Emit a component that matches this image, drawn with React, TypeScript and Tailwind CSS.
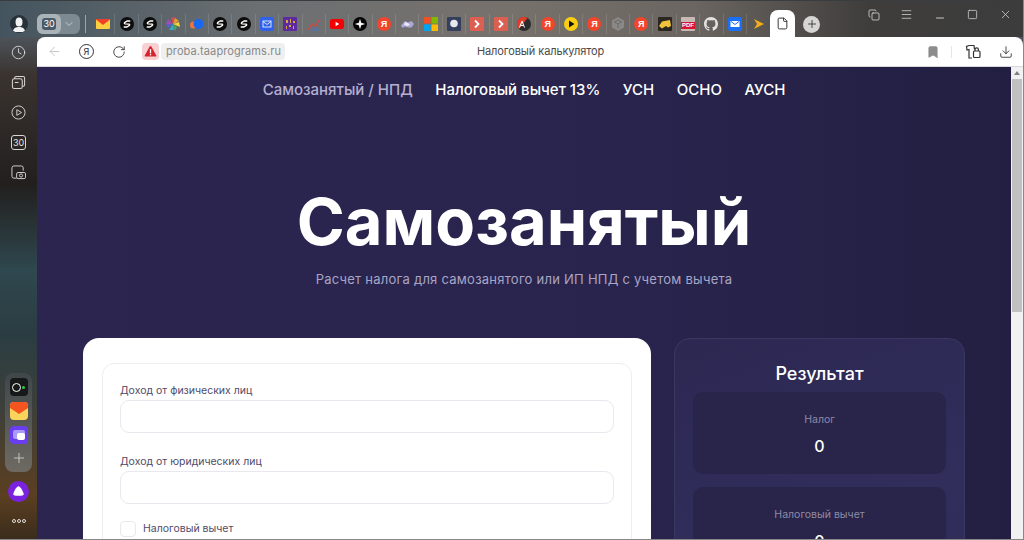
import { ArrowLeft, Bookmark, ChevronDown, Download, File, Minus, Plus, RotateCw, Square, X, Menu, Copy, Clock } from 'lucide-react'

const sans = 'font-["Inter","Noto_Sans",sans-serif]'

function Logo({ kind }: { kind: string }) {
  if (kind === 'mail') {
    return (
      <svg viewBox="0 0 14 14" className="h-[14px] w-[14px]">
        <rect y="2" width="14" height="10" rx="1" fill="#fbcf3d" />
        <path d="M0 2.5 7 8l7-5.5V2H0z" fill="#f0402b" />
      </svg>
    )
  }
  if (kind === 's') {
    return (
      <svg viewBox="0 0 14 14" className="h-[14px] w-[14px]">
        <circle cx="7" cy="7" r="7" fill="#0c0c0c" />
        <path d="M9.800 4H7L4.600 5.600Q3.800 6.600 5 6.900L9 7.100Q10.200 7.400 9.400 8.400L7 10H4.200" stroke="#fff" strokeWidth="1.300" fill="none" strokeLinecap="round" strokeLinejoin="round" />
      </svg>
    )
  }
  if (kind === 'wheel') {
    return (
      <svg viewBox="0 0 14 14" className="h-[14px] w-[14px]">
        <path d="M7 7 5 1l4-1z" fill="#d94c57" />
        <path d="M7 7l2-6 4 3z" fill="#ef9a2d" />
        <path d="M7 7l6-2 1 5z" fill="#f5d33f" />
        <path d="M7 7l4 3-2 4z" fill="#43ad5a" />
        <path d="M7 7l1 6-5 0z" fill="#3ca7c9" />
        <path d="M7 7l-5 4-2-4z" fill="#5a62c9" />
        <path d="M7 7H0l2-5z" fill="#a04fb0" />
      </svg>
    )
  }
  if (kind === 'dot') {
    return (
      <svg viewBox="0 0 14 14" className="h-[14px] w-[14px]">
        <circle cx="3.500" cy="8" r="3.500" fill="#f0743a" />
        <circle cx="8.500" cy="7" r="5" fill="#1668f0" />
      </svg>
    )
  }
  if (kind === 'bluemail') {
    return (
      <svg viewBox="0 0 14 14" className="h-[14px] w-[14px]">
        <rect width="14" height="14" rx="2" fill="#2f62e8" />
        <rect x="3" y="4" width="8" height="6" fill="none" stroke="#fff" strokeWidth="0.8" />
        <path d="M3 4.500 7 7.500 11 4.500" fill="none" stroke="#fff" strokeWidth="0.8" />
      </svg>
    )
  }
  if (kind === 'purple') {
    return (
      <svg viewBox="0 0 14 14" className="h-[14px] w-[14px]">
        <rect width="14" height="14" rx="1" fill="#5d2aa0" />
        <path d="M3 3h2v3H3zM7 2h1v4H7zM10 4h2v2h-2zM3 9h1v3H3zM6 8h2v2H6zM10 9h1v3h-1z" fill="#d9a63c" />
      </svg>
    )
  }
  if (kind === 'chart') {
    return (
      <svg viewBox="0 0 14 14" className="h-[14px] w-[14px]" fill="none">
        <path d="M1 13 5 7l3 3 5-8" stroke="#d8433c" strokeWidth="1.2" />
        <path d="M2 13h11M4 12l3-2 3 2" stroke="#4878b8" strokeWidth="1" />
      </svg>
    )
  }
  if (kind === 'yt') {
    return (
      <svg viewBox="0 0 14 14" className="h-[14px] w-[14px]">
        <rect y="2" width="14" height="10" rx="2.500" fill="#f40000" />
        <path d="M5.600 4.800v4.400L9.200 7z" fill="#fff" />
      </svg>
    )
  }
  if (kind === 'star') {
    return (
      <svg viewBox="0 0 14 14" className="h-[14px] w-[14px]">
        <circle cx="7" cy="7" r="7" fill="#050505" />
        <path d="M7 1.800 8.200 5.800 12.200 7 8.200 8.200 7 12.200 5.800 8.200 1.800 7 5.800 5.800z" fill="#fff" />
      </svg>
    )
  }
  if (kind === 'ya') {
    return (
      <span className="flex h-[14px] w-[14px] items-center justify-center rounded-full bg-[#f2452c] font-['Liberation_Sans',sans-serif] text-[9px] leading-none font-bold text-white">
        Я
      </span>
    )
  }
  if (kind === 'cloud') {
    return (
      <svg viewBox="0 0 14 14" className="h-[14px] w-[14px]">
        <path d="M1 8.500 5 4l3 1.500L11.500 4 14 7l-2.500 3.500H8L5 9.500 2.500 11z" fill="#a9a8d8" />
        <path d="M5 5l3 1 2 2-3 1-3-1z" fill="#e9e9f5" />
      </svg>
    )
  }
  if (kind === 'ms') {
    return (
      <svg viewBox="0 0 14 14" className="h-[14px] w-[14px]">
        <rect width="6.600" height="6.600" fill="#f25022" />
        <rect x="7.400" width="6.600" height="6.600" fill="#7fba00" />
        <rect y="7.400" width="6.600" height="6.600" fill="#00a4ef" />
        <rect x="7.400" y="7.400" width="6.600" height="6.600" fill="#ffb900" />
      </svg>
    )
  }
  if (kind === 'blob') {
    return (
      <svg viewBox="0 0 14 14" className="h-[14px] w-[14px]">
        <rect width="14" height="14" rx="1" fill="#333f5c" />
        <circle cx="7" cy="6.500" r="3.800" fill="#e6e8f0" />
      </svg>
    )
  }
  if (kind === 'next') {
    return (
      <svg viewBox="0 0 14 14" className="h-[14px] w-[14px]">
        <rect width="14" height="14" rx="1" fill="#dc5f52" />
        <path d="M5 3.500 8.500 7 5 10.500" fill="none" stroke="#fff" strokeWidth="1.8" />
      </svg>
    )
  }
  if (kind === 'translate') {
    return (
      <svg viewBox="0 0 14 14" className="h-[14px] w-[14px]">
        <circle cx="7" cy="7" r="7" fill="#2c2c2c" />
        <path d="M7 0a7 7 0 0 0-5 12L10.500 1A7 7 0 0 0 7 0z" fill="#e23d2a" />
        <path d="M2.500 10.500 5 4l2.500 6.500M3.500 8.500h3" stroke="#fff" strokeWidth="1" fill="none" />
      </svg>
    )
  }
  if (kind === 'play') {
    return (
      <svg viewBox="0 0 14 14" className="h-[14px] w-[14px]">
        <circle cx="7" cy="7" r="7" fill="#fbcf10" />
        <path d="M5 3.500v7L10.500 7z" fill="#111" />
      </svg>
    )
  }
  if (kind === 'hex') {
    return (
      <svg viewBox="0 0 14 14" className="h-[14px] w-[14px]">
        <path d="M7 0 13 3.500v7L7 14 1 10.500v-7z" fill="#8a8886" />
        <path d="M7 3 10.500 5 7 7 3.500 5zM7 7v4" stroke="#6d6b69" fill="none" />
      </svg>
    )
  }
  if (kind === 'game') {
    return (
      <svg viewBox="0 0 14 14" className="h-[14px] w-[14px]">
        <rect width="14" height="14" rx="1" fill="#2a2620" />
        <path d="M1 9 4 4.500 12 3l1 6-3 1.500-2-1.500-4 2.500z" fill="#f0c33a" />
      </svg>
    )
  }
  if (kind === 'pdf') {
    return (
      <span className="flex h-[14px] w-[14px] items-end justify-center rounded-[1px] bg-[#c9b9b4]">
        <span className="mb-[2px] bg-[#d8152d] px-[1px] font-['Liberation_Sans',sans-serif] text-[6px] leading-[7px] font-bold text-white">PDF</span>
      </span>
    )
  }
  if (kind === 'github') {
    return (
      <svg viewBox="0 0 16 16" className="h-[14px] w-[14px]" fill="#e4e2e0">
        <path d="M8 0C3.580 0 0 3.580 0 8c0 3.540 2.290 6.530 5.470 7.590.4.070.55-.17.55-.38 0-.19-.01-.82-.01-1.490-2.010.37-2.530-.49-2.690-.94-.09-.23-.48-.94-.82-1.130-.28-.15-.68-.52-.01-.53.630-.01 1.080.58 1.230.82.720 1.210 1.870.870 2.330.660.070-.520.280-.870.510-1.070-1.780-.2-3.640-.89-3.640-3.950 0-.870.310-1.590.820-2.150-.08-.2-.36-1.020.08-2.120 0 0 .67-.21 2.200.82a7.500 7.500 0 0 1 4 0c1.530-1.040 2.200-.82 2.200-.82.440 1.100.160 1.920.080 2.120.510.560.820 1.270.820 2.150 0 3.070-1.870 3.750-3.650 3.950.290.250.540.730.540 1.480 0 1.070-.01 1.930-.01 2.200 0 .21.150.460.550.380A8.010 8.010 0 0 0 16 8c0-4.420-3.580-8-8-8z" />
      </svg>
    )
  }
  if (kind === 'bluemail2') {
    return (
      <svg viewBox="0 0 14 14" className="h-[14px] w-[14px]">
        <rect width="14" height="14" rx="2" fill="#1b6ff2" />
        <rect x="2.500" y="4" width="9" height="6" fill="#fff" />
        <path d="M3 4.500 7 7.500 11 4.500" fill="none" stroke="#1b6ff2" strokeWidth="1" />
      </svg>
    )
  }
  return (
    <svg viewBox="0 0 14 14" className="h-[14px] w-[14px]">
      <path d="M2 2 12 7 2 12 5 7z" fill="#f3ad1b" />
    </svg>
  )
}

const pinned = [
  'mail', 's', 's', 'wheel', 'dot', 's', 's', 'bluemail', 'purple', 'chart', 'yt', 'star', 'ya', 'cloud', 'ms', 'blob',
  'next', 'next', 'translate', 'ya', 'play', 'ya', 'hex', 'ya', 'game', 'pdf', 'github', 'bluemail2', 'arrow',
]

function TopBar() {
  return (
    <div className="flex h-[37px] items-center border-t border-[#3a3d40] pt-[10px]">
      <div className="flex w-[37px] justify-center">
        <div className="flex h-[18px] w-[18px] items-end justify-center overflow-hidden rounded-full bg-[#26313a]">
          <svg viewBox="0 0 18 18" className="h-[18px] w-[18px]" fill="#f2f2f2">
            <ellipse cx="9" cy="7" rx="3.500" ry="4.500" />
            <path d="M3 17c0-4 3-5 6-5s6 1 6 5z" />
          </svg>
        </div>
      </div>
      <div className="flex h-[20px] w-[43px] items-center rounded-md bg-[#7d8a91]">
        <div className="flex h-[20px] w-[24px] items-center justify-center rounded-md bg-[#aab4b8]">
          <span className={`${sans} rounded-[3px] bg-[#4b5a66] px-[1px] text-[9px] leading-[12px] text-white`}>30</span>
        </div>
        <ChevronDown className="ml-[2px] h-3 w-3 text-[#c4ccd0]" strokeWidth={2} />
      </div>
      <div className="mr-[6px] ml-[5px] h-[18px] w-px bg-[#a0a6a8]" />
      <div className="flex items-center">
        {pinned.map((kind, i) => (
          <div key={i} className="flex h-[20px] w-[23.4px] items-center justify-center border-r border-[#ffffff1f] last:border-r-0">
            <Logo kind={kind} />
          </div>
        ))}
      </div>
      <div className="-mt-[10px] flex h-[27px] w-[25px] items-center justify-center self-end rounded-t-lg bg-white">
        <File className="h-[13px] w-[13px] text-[#333]" strokeWidth={1.8} />
      </div>
      <div className="ml-[8px] flex h-[17px] w-[17px] items-center justify-center rounded-full bg-[#d6d5d3]">
        <Plus className="h-3 w-3 text-[#444]" strokeWidth={2} />
      </div>
      <div className="-mt-[19px] ml-auto flex items-center pr-[1px] text-[#d9d8d6]">
        <div className="flex h-[16px] w-[33px] items-center justify-center">
          <Copy className="h-[12px] w-[12px]" strokeWidth={1.6} />
        </div>
        <div className="flex h-[16px] w-[33px] items-center justify-center">
          <Menu className="h-[13px] w-[13px]" strokeWidth={1.4} />
        </div>
        <div className="flex h-[16px] w-[33px] items-end justify-center">
          <Minus className="-mb-[1px] h-[12px] w-[12px]" strokeWidth={1.8} />
        </div>
        <div className="flex h-[16px] w-[33px] items-center justify-center">
          <Square className="h-[11px] w-[11px]" strokeWidth={1.6} />
        </div>
        <div className="flex h-[16px] w-[33px] items-center justify-center">
          <X className="h-[13px] w-[13px]" strokeWidth={1.4} />
        </div>
      </div>
    </div>
  )
}

function SideBar() {
  return (
    <div className="flex w-[37px] shrink-0 flex-col items-center">
      <Clock className="mt-[8px] h-[15px] w-[15px] text-[#e4e6e6]" strokeWidth={1.3} />
      <svg viewBox="0 0 16 16" className="mt-[15px] h-[15px] w-[15px] text-[#d8d6d4]" fill="none" stroke="currentColor" strokeWidth="1.1">
        <rect x="1.500" y="4" width="10.500" height="10.500" rx="2" />
        <path d="M4 4V3a1.500 1.500 0 0 1 1.500-1.500H13a1.500 1.500 0 0 1 1.500 1.500v7.500A1.500 1.500 0 0 1 13 12h-1" />
        <path d="M4 8h4" />
      </svg>
      <svg viewBox="0 0 16 16" className="mt-[15px] h-[15px] w-[15px] text-[#d8d6d4]" fill="none" stroke="currentColor" strokeWidth="1">
        <circle cx="8" cy="8" r="7" />
        <path d="M6.200 5v6l5-3z" />
      </svg>
      <div className={`${sans} mt-[15px] flex h-[15px] w-[15px] items-center justify-center rounded-[3px] border border-[#d8d6d4] text-[9px] leading-none text-[#e4e2e0]`}>
        30
      </div>
      <svg viewBox="0 0 16 16" className="mt-[15px] h-[15px] w-[15px] text-[#d8d6d4]" fill="none" stroke="currentColor" strokeWidth="1">
        <path d="M6 14H3a2 2 0 0 1-2-2V3a2 2 0 0 1 2-2h8a2 2 0 0 1 2 2v3" />
        <rect x="6" y="8" width="9.500" height="6.500" rx="1.500" />
        <circle cx="10.700" cy="11.200" r="1.700" />
      </svg>
      <div className="mt-[193px] flex h-[99px] w-[27px] shrink-0 flex-col items-center gap-[6px] rounded-[8px] bg-[linear-gradient(180deg,#3f474b,#6e6a62)] pt-[5px]">
        <div className="flex h-[18px] w-[18px] items-center justify-center gap-[1px] rounded-[4px] bg-[#16181a]">
          <span className="h-[9px] w-[9px] rounded-full border border-white" />
          <span className="h-[3px] w-[3px] rounded-full bg-[#2ed14a]" />
        </div>
        <svg viewBox="0 0 18 18" className="h-[18px] w-[18px]">
          <rect width="18" height="18" rx="4" fill="#fbd45c" />
          <path d="M0 4a4 4 0 0 1 4-4h10a4 4 0 0 1 4 4v2l-9 6-9-6z" fill="#f4551f" />
        </svg>
        <svg viewBox="0 0 18 18" className="h-[18px] w-[18px]">
          <rect width="18" height="18" rx="4" fill="#6a3df0" />
          <rect x="3" y="4" width="12" height="9" rx="2" fill="#a99bf8" />
          <rect x="7" y="7" width="8" height="7" rx="2" fill="#fff" />
        </svg>
        <Plus className="h-[16px] w-[16px] text-[#d8d8d4]" strokeWidth={1.2} />
      </div>
      <svg viewBox="0 0 22 22" className="mt-[9px] h-[21px] w-[21px] shrink-0">
        <circle cx="11" cy="11" r="11" fill="#7a22e0" />
        <path d="M11 5.500c2 0 5.500 6.500 5.500 8.500 0 1.500-2 1.500-5.500 1.500S5.500 15.500 5.500 14c0-2 3.500-8.500 5.500-8.500z" fill="#fff" />
      </svg>
      <div className="mt-[17px] flex gap-[1px]">
        <span className="h-[4px] w-[4px] rounded-full border border-[#e0dcd8]" />
        <span className="h-[4px] w-[4px] rounded-full border border-[#e0dcd8]" />
        <span className="h-[4px] w-[4px] rounded-full border border-[#e0dcd8]" />
      </div>
    </div>
  )
}

function AddressBar() {
  return (
    <div className="relative flex h-[30px] shrink-0 items-center rounded-t-lg border-b border-[#d8d8d8] bg-white pl-[10px]">
      <ArrowLeft className="h-[15px] w-[15px] text-[#bdbdbd]" strokeWidth={1.3} />
      <div className={`${sans} ml-[17px] flex h-[15px] w-[15px] items-center justify-center rounded-full border border-[#333] text-[9px] text-[#333]`}>Я</div>
      <RotateCw className="ml-[18px] h-[14px] w-[14px] text-[#333]" strokeWidth={1.5} />
      <div className="ml-[16px] flex h-[17px] w-[17px] items-center justify-center rounded-[4px] bg-[#f9d0d2]">
        <svg viewBox="0 0 14 14" className="h-[13px] w-[13px]">
          <path d="M7 1.200a1 1 0 0 1 .9.5l5.300 9.600a.8.8 0 0 1-.7 1.200h-11a.8.8 0 0 1-.7-1.200l5.300-9.600a1 1 0 0 1 .9-.5z" fill="#d5222e" />
          <rect x="6.300" y="4.500" width="1.400" height="4.500" fill="#fff" />
          <rect x="6.300" y="9.800" width="1.400" height="1.400" fill="#fff" />
        </svg>
      </div>
      <div className={`${sans} ml-[2px] flex h-[17px] w-[124px] items-center rounded-[4px] bg-[#efefef] pl-[5px] text-[11px] tracking-[0.1px] text-[#888]`}>
        proba.taaprograms.ru
      </div>
      <div className={`${sans} absolute right-0 left-0 pl-[21px] text-center text-[11px] tracking-[-0.1px] text-[#4a4a4a]`}>
        Налоговый калькулятор
      </div>
      <div className="ml-auto flex items-center">
        <Bookmark className="h-[14px] w-[14px] fill-[#8c8c8c] text-[#8c8c8c]" strokeWidth={1.5} />
        <div className="ml-[11px] h-[12px] w-px bg-[#e6e6e6]" />
        <svg viewBox="0 0 16 16" className="ml-[13px] h-[16px] w-[16px] text-[#333]" fill="none" stroke="currentColor" strokeWidth="1.2">
          <path d="M4 1.500h5l.5 4M4 1.500 1.500 2.500 2 6l2-.5V14h3" />
          <rect x="8.500" y="7" width="6.500" height="6.500" rx="1" />
          <path d="M10 7V5.500a1.700 1.700 0 0 1 3.400 0V7" />
        </svg>
        <Download className="mr-[10px] ml-[18px] h-[14px] w-[14px] text-[#333]" strokeWidth={1.5} />
      </div>
    </div>
  )
}

function Field({ label }: { label: string }) {
  return (
    <div>
      <div className="text-[10.5px] leading-[18px] text-[#4f4b69]">{label}</div>
      <div className="h-[33px] rounded-[9px] border border-[#e8e8ee] bg-white" />
    </div>
  )
}

function ResultBox({ label, value }: { label: string; value: string }) {
  return (
    <div className="flex h-[82px] shrink-0 flex-col items-center rounded-[10px] bg-[#28244a] pt-[20px]">
      <div className="text-[10.5px] leading-[16px] text-[#8f8ba8]">{label}</div>
      <div className="mt-[8px] text-[16px] leading-[20px] font-medium text-white">{value}</div>
    </div>
  )
}

function Page() {
  return (
    <div className={`${sans} flex min-h-0 flex-1 overflow-hidden`}>
      <div className="flex min-w-0 flex-1 flex-col items-center overflow-hidden bg-[linear-gradient(90deg,#2b2550_0%,#29244d_60%,#231f42_100%)]">
        <nav className="mt-[14px] flex h-[18px] shrink-0 items-center gap-[22.5px] text-[15px] leading-[18px] font-medium text-white">
          <span className="text-[#b5b0d0]">Самозанятый / НПД</span>
          <span>Налоговый вычет 13%</span>
          <span>УСН</span>
          <span>ОСНО</span>
          <span>АУСН</span>
        </nav>
        <h1 className="mt-[83px] shrink-0 text-[65px] leading-[80px] font-bold text-white">Самозанятый</h1>
        <p className="mt-[7px] shrink-0 text-[13px] leading-[20px] tracking-[0.25px] text-[#a9a5c4]">
          Расчет налога для самозанятого или ИП НПД с учетом вычета
        </p>
        <div className="mt-[49px] flex w-[882px] shrink-0 items-start gap-[23px]">
          <div className="h-[300px] w-[568px] shrink-0 rounded-[16px] bg-white px-[19px] pt-[25px]">
            <div className="flex h-[260px] flex-col gap-[20px] rounded-[12px] border border-[#eeeef2] px-[17px] pt-[18px]">
              <Field label="Доход от физических лиц" />
              <Field label="Доход от юридических лиц" />
              <label className="-mt-[3px] flex items-center gap-[7px] text-[10.5px] text-[#4f4b69]">
                <span className="h-[16px] w-[16px] rounded-[4px] border border-[#e8e8ee]" />
                Налоговый вычет
              </label>
            </div>
          </div>
          <div className="flex h-[300px] w-[291px] shrink-0 flex-col rounded-[16px] border border-[#3a3760] bg-[linear-gradient(160deg,#2c2852,#312e5c_60%,#2d2a55)] px-[18px] pt-[24px]">
            <div className="text-center text-[18px] leading-[22px] font-medium text-white">Результат</div>
            <div className="mt-[7px] flex flex-col gap-[13px]">
              <ResultBox label="Налог" value="0" />
              <ResultBox label="Налоговый вычет" value="0" />
            </div>
          </div>
        </div>
      </div>
      <div className="flex w-[12px] shrink-0 flex-col items-center bg-[#f1f1f1] px-[1px]">
        <div className="mt-[4px] h-0 w-0 border-x-[3px] border-b-[4px] border-x-transparent border-b-[#808080]" />
        <div className="mt-[4px] h-[233px] w-full bg-[#c1c1c1]" />
      </div>
    </div>
  )
}

export default function App() {
  return (
    <div className="flex h-[540px] w-[1024px] flex-col overflow-hidden border-r border-b border-[#888] bg-[linear-gradient(180deg,#44545e_0%,#55606a_4%,#3a3330_14%,#221f1e_34%,#2f474e_50%,#2b3d42_62%,#3d3f3a_76%,#5b3f20_92%,#3a2c1c_100%)]">
      <div className="h-[37px] shrink-0 bg-[linear-gradient(90deg,#44545e_0%,#6b6f72_25%,#77716c_50%,#6a6560_68%,#3f3d3c_85%,#3c3c3c_100%)]">
        <TopBar />
      </div>
      <div className="flex min-h-0 flex-1">
        <SideBar />
        <div className="flex min-w-0 flex-1 flex-col">
          <AddressBar />
          <Page />
        </div>
      </div>
    </div>
  )
}
